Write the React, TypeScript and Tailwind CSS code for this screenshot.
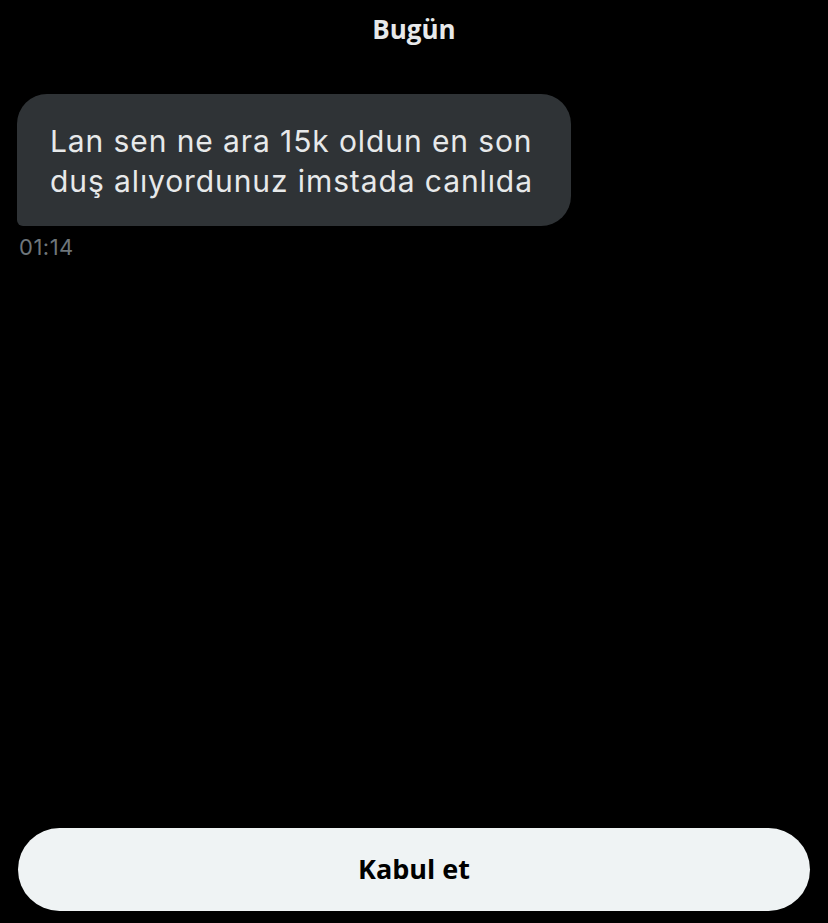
export default function App() {
  return (
    <div className="h-[923px] w-[828px] bg-black flex flex-col font-['Inter',sans-serif] overflow-hidden">
      {/* date divider */}
      <div className="pt-[14px] text-center">
        <span className="text-[26px] leading-[30px] font-bold text-[#e7e9ea] font-['Open_Sans',sans-serif]">
          Bugün
        </span>
      </div>

      {/* incoming message */}
      <div className="mt-[49px] pl-[17px]">
        <div className="w-[554px] bg-[#2f3336] rounded-[30px] rounded-bl-[6px] pl-[33px] pr-[20px] pt-[27px] pb-[25px]">
          <p className="text-[30px] leading-[40px] text-[#e7e9ea] tracking-[0.9px] whitespace-nowrap">
            Lan sen ne ara 15k oldun en son
            <br />
            duş alıyordunuz imstada canlıda
          </p>
        </div>
        <div className="mt-[8px] pl-[2px] text-[22px] leading-[26px] text-[#6e767b] tracking-[0.5px]">01:14</div>
      </div>

      {/* accept button */}
      <div className="mt-auto px-[18px] pb-[12px]">
        <button className="w-full h-[83px] rounded-full bg-[#eff3f4] text-black text-[27px] font-bold font-['Open_Sans',sans-serif]">
          Kabul et
        </button>
      </div>
    </div>
  );
}
